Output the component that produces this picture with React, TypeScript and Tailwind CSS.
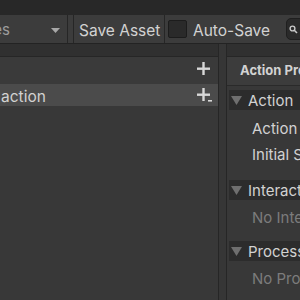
import React from "react";

function Plus({ dot = false }: { dot?: boolean }) {
  return (
    <svg width="16" height="16" viewBox="0 0 16 16" className="shrink-0">
      <rect x="1" y="6.5" width="13" height="2.4" fill="#d8d8d8" />
      <rect x="6.3" y="1" width="2.4" height="13" fill="#d8d8d8" />
      {dot && <rect x="12" y="13" width="4" height="1.6" fill="#d8d8d8" />}
    </svg>
  );
}

function Tri() {
  return (
    <svg width="11" height="10" viewBox="0 0 11 10" className="shrink-0">
      <polygon points="0,1 11,1 5.5,10" fill="#6f6f6f" />
    </svg>
  );
}

function Band({ label }: { label: string }) {
  return (
    <div className="ml-[2px] flex h-[20px] items-center bg-[#2c2c2c] pl-[2px] gap-[6px]">
      <Tri />
      <span className="pt-[3px] whitespace-nowrap text-[15px] text-[#d2d2d2]">{label}</span>
    </div>
  );
}

export default function App() {
  return (
    <div
      className="h-[300px] w-[300px] overflow-hidden bg-[#383838] text-[#c4c4c4]"
      style={{ fontFamily: "Inter, 'Liberation Sans', sans-serif" }}
    >
      <div className="h-[15px] bg-[#282828]" />
      {/* toolbar */}
      <div className="flex h-[29px] items-stretch border-b border-[#232323] bg-[#3c3c3c]">
        <div className="flex w-[66px] shrink-0 items-center justify-end overflow-hidden pr-[6px]">
          <span className="shrink-0 pt-[3px] whitespace-nowrap text-[15px] text-[#9c9c9c]">All Control Schemes</span>
          <div className="w-[41px] shrink-0" />
          <svg width="9" height="5" viewBox="0 0 9 5" className="shrink-0 mt-[2px]">
            <polygon points="0,0 9,0 4.5,5" fill="#a8a8a8" />
          </svg>
        </div>
        <div className="ml-[1px] w-[7px] shrink-0 border-l border-r border-[#262626]" />
        <div className="flex w-[91px] shrink-0 items-center border-r border-[#262626] pl-[5px]">
          <span className="pt-[3px] whitespace-nowrap text-[15.5px] text-[#d2d2d2]">Save Asset</span>
        </div>
        <div className="ml-[3px] flex items-center">
          <div className="h-[18px] w-[19px] rounded-[2px] border border-[#1c1c1c] bg-[#2a2a2a]" />
          <span className="ml-[6px] pt-[3px] whitespace-nowrap text-[15.5px] text-[#d2d2d2]">Auto-Save</span>
        </div>
        <div className="ml-[16px] flex items-center">
          <div className="flex h-[22px] w-[60px] items-center rounded-[5px] border border-[#1f1f1f] bg-[#2a2a2a] pl-[2px]">
            <svg width="9" height="9" viewBox="0 0 9 9">
              <circle cx="3.5" cy="3.5" r="2.4" stroke="#c8c8c8" strokeWidth="1.4" fill="none" />
              <line x1="5.3" y1="5.3" x2="8" y2="8" stroke="#c8c8c8" strokeWidth="1.6" />
            </svg>
          </div>
        </div>
      </div>
      {/* main */}
      <div className="flex h-[256px]">
        {/* left panel */}
        <div className="flex w-[219px] shrink-0 flex-col border-r border-[#262626]">
          <div className="h-[13px] border-b border-[#262626] bg-[#303030]" />
          <div className="flex h-[27px] items-center justify-end bg-[#3a3a3a] pr-[6px] pb-[4px]">
            <Plus />
          </div>
          <div className="flex h-[22px] items-center justify-between bg-[#4b4b4b] pr-[6px]">
            <span className="pl-[1px] pt-[3px] whitespace-nowrap text-[15.5px] text-[#d2d2d2]">action</span>
            <Plus dot />
          </div>
          <div className="flex-1 bg-[#383838]" />
        </div>
        <div className="w-[8px] shrink-0 border-r border-[#262626] bg-[#363636]" />
        {/* right panel */}
        <div className="flex min-w-0 flex-1 flex-col">
          <div className="h-[13px] border-b border-[#262626] bg-[#303030]" />
          <div className="flex h-[29px] items-center border-b border-[#2a2a2a] bg-[#3c3c3c] pl-[13px]">
            <span className="whitespace-nowrap text-[13px] font-bold text-[#d2d2d2]">Action Properties</span>
          </div>
          <div className="mt-[4px]">
            <Band label="Action" />
            <div className="mt-[4px] flex h-[27px] items-center pl-[25px]">
              <span className="pt-[3px] whitespace-nowrap text-[15px] text-[#d2d2d2]">Action Type</span>
            </div>
            <div className="flex h-[26px] items-center pl-[25px]">
              <span className="pt-[3px] whitespace-nowrap text-[15px] text-[#d2d2d2]">Initial State Check</span>
            </div>
          </div>
          <div className="mt-[13px]">
            <Band label="Interactions" />
            <div className="flex h-[34px] items-center pl-[25px]">
              <span className="pt-[3px] whitespace-nowrap text-[15px] text-[#7c7c7c]">No Interactions have been added.</span>
            </div>
          </div>
          <div className="mt-[7px]">
            <Band label="Processors" />
            <div className="flex h-[34px] items-center pl-[25px]">
              <span className="pt-[3px] whitespace-nowrap text-[15px] text-[#7c7c7c]">No Processors have been added.</span>
            </div>
          </div>
        </div>
      </div>
    </div>
  );
}
